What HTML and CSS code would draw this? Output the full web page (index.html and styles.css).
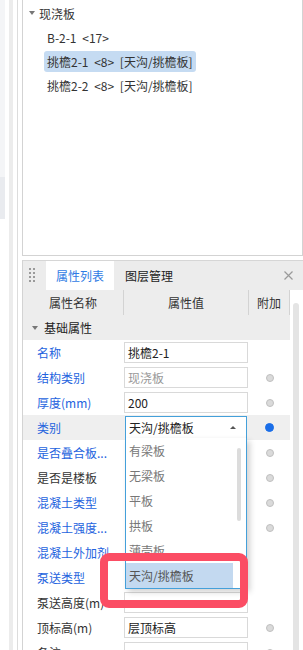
FILE: index.html
```html
<!DOCTYPE html>
<html lang="zh-CN">
<head>
    <meta charset="UTF-8">
    <title>属性列表</title>
    <link rel="stylesheet" href="styles.css">
</head>
<body>

<div class="frame">
    <!-- 左侧的窄条 -->
    <div class="side-strip">
        <div class="strip-top"></div>
        <div class="strip-mid"></div>
    </div>
    <div class="side-bar"></div>
    <div class="side-line"></div>

    <div class="main">
        <!-- 构件树 -->
        <div class="tree">
            <div class="tree-row tree-group"><span class="caret"></span>现浇板</div>
            <div class="tree-row tree-leaf"><span class="tree-label">B-2-1 &lt;17&gt;</span></div>
            <div class="tree-row tree-leaf"><span class="tree-label selected">挑檐2-1 &lt;8&gt; [天沟/挑檐板]</span></div>
            <div class="tree-row tree-leaf"><span class="tree-label">挑檐2-2 &lt;8&gt; [天沟/挑檐板]</span></div>
        </div>

        <!-- 属性面板 -->
        <div class="props">
            <div class="tabbar">
                <div class="grip">
                    <i></i><i></i><i></i><i></i><i></i><i></i><i></i><i></i>
                </div>
                <div class="tab active">属性列表</div>
                <div class="tab">图层管理</div>
                <div class="close">
                    <svg width="9" height="9" viewBox="0 0 9 9"><path d="M0.5 0.5L8.5 8.5M8.5 0.5L0.5 8.5" stroke="#9a9a9a" stroke-width="1.2"/></svg>
                </div>
            </div>

            <div class="props-body">
                <div class="grid">
                    <div class="prop-row head">
                        <div class="cell">属性名称</div>
                        <div class="cell">属性值</div>
                        <div class="cell">附加</div>
                    </div>
                    <div class="group-row"><span class="caret"></span>基础属性</div>

                    <div class="prop-row">
                        <div class="label blue">名称</div>
                        <div class="value"><div class="input">挑檐2-1</div></div>
                        <div class="extra"></div>
                    </div>
                    <div class="prop-row">
                        <div class="label blue">结构类别</div>
                        <div class="value"><div class="input muted">现浇板</div></div>
                        <div class="extra"><span class="dot"></span></div>
                    </div>
                    <div class="prop-row">
                        <div class="label blue">厚度(mm)</div>
                        <div class="value"><div class="input">200</div></div>
                        <div class="extra"><span class="dot"></span></div>
                    </div>
                    <div class="prop-row current">
                        <div class="label blue">类别</div>
                        <div class="value">
                            <div class="combo">
                                <div class="combo-box">天沟/挑檐板<span class="arrow"></span></div>
                                <div class="dropdown">
                                    <div class="dd-items">
                                        <div class="dd-item">有梁板</div>
                                        <div class="dd-item">无梁板</div>
                                        <div class="dd-item">平板</div>
                                        <div class="dd-item">拱板</div>
                                        <div class="dd-item">薄壳板</div>
                                        <div class="dd-item chosen">天沟/挑檐板</div>
                                    </div>
                                    <div class="dd-track"><div class="dd-thumb"></div></div>
                                </div>
                            </div>
                        </div>
                        <div class="extra"><span class="dot on"></span></div>
                    </div>
                    <div class="prop-row">
                        <div class="label blue">是否叠合板...</div>
                        <div class="value"></div>
                        <div class="extra"><span class="dot"></span></div>
                    </div>
                    <div class="prop-row">
                        <div class="label">是否是楼板</div>
                        <div class="value"></div>
                        <div class="extra"><span class="dot"></span></div>
                    </div>
                    <div class="prop-row">
                        <div class="label blue">混凝土类型</div>
                        <div class="value"></div>
                        <div class="extra"><span class="dot"></span></div>
                    </div>
                    <div class="prop-row">
                        <div class="label blue">混凝土强度...</div>
                        <div class="value"></div>
                        <div class="extra"><span class="dot"></span></div>
                    </div>
                    <div class="prop-row">
                        <div class="label blue">混凝土外加剂</div>
                        <div class="value"></div>
                        <div class="extra"></div>
                    </div>
                    <div class="prop-row">
                        <div class="label blue">泵送类型</div>
                        <div class="value"></div>
                        <div class="extra"></div>
                    </div>
                    <div class="prop-row">
                        <div class="label">泵送高度(m)</div>
                        <div class="value"><div class="input"></div></div>
                        <div class="extra"></div>
                    </div>
                    <div class="prop-row">
                        <div class="label">顶标高(m)</div>
                        <div class="value"><div class="input">层顶标高</div></div>
                        <div class="extra"><span class="dot"></span></div>
                    </div>
                    <div class="prop-row">
                        <div class="label">备注</div>
                        <div class="value"><div class="input"></div></div>
                        <div class="extra"><span class="dot"></span></div>
                    </div>
                </div>
                <div class="vscroll"></div>
            </div>

            <!-- 红色标注框 -->
            <div class="mark"></div>
        </div>
    </div>
</div>

</body>
</html>
```

FILE: styles.css
```css
/* 整体页面 */
body {
    margin: 0;
    font-family: "Noto Sans CJK SC", "Noto Sans", sans-serif;
    font-size: 12px;
    color: #333;
    background: #fff;
}

.frame {
    display: flex;
    width: 303px;
    height: 650px;
    overflow: hidden;
}

/* 左侧窄条 */
.side-strip {
    width: 5px;
}

.strip-top {
    height: 177px;
    background: #f4f5f7;
}

.strip-mid {
    height: 42px;
    background: #e9ebef;
}

.side-bar {
    width: 4px;
    margin-left: 4px;
    background: #ececec;
}

.side-line {
    width: 1px;
    margin-left: 4px;
    background: #dcdcdc;
}

.main {
    flex: 1;
    margin-left: 4px;
    display: flex;
    flex-direction: column;
}

/* 构件树 */
.tree {
    flex-shrink: 0;
    height: 256px;
    box-sizing: border-box;
    padding-top: 1px;
    border: 1px solid #d3d3d3;
    border-top: none;
}

.tree-row {
    height: 24px;
    display: flex;
    align-items: center;
    white-space: nowrap;
}

.tree-group {
    padding-left: 6px;
}

.tree-group .caret {
    margin-right: 4px;
}

.caret {
    width: 0;
    height: 0;
    border-left: 3px solid transparent;
    border-right: 3px solid transparent;
    border-top: 4px solid #777;
}

.tree-leaf {
    padding-left: 21px;
}

.tree-label {
    height: 21px;
    line-height: 21px;
    padding: 0 3px;
    border-radius: 3px;
    word-spacing: 3px;
}

.tree-label.selected {
    background: #c5dbf2;
}

/* 属性面板 */
.props {
    position: relative;
    margin-top: 4px;
    flex: 1;
    border-left: 1px solid #d3d3d3;
}

.tabbar {
    height: 30px;
    box-sizing: border-box;
    border-top: 1px solid #d6d6d6;
    background: #ececec;
    display: flex;
    align-items: stretch;
}

.grip {
    margin: 7px 0 0 6px;
    width: 6px;
    height: 14px;
    display: grid;
    grid-template-columns: 2px 2px;
    grid-auto-rows: 2px;
    column-gap: 2px;
    row-gap: 2px;
}

.grip i {
    background: #9a9a9a;
}

.tab {
    display: flex;
    align-items: center;
    padding: 0 11px;
    font-size: 12px;
    color: #222;
}

.tab.active {
    margin-left: 11px;
    width: 68px;
    padding: 0;
    justify-content: center;
    background: #fff;
    color: #2f7be4;
}

.close {
    margin-left: auto;
    margin-right: 10px;
    display: flex;
    align-items: center;
}

.props-body {
    display: flex;
}

.grid {
    width: 267px;
}

.prop-row {
    display: grid;
    grid-template-columns: 101px 125px 41px;
    height: 25px;
    align-items: center;
}

.prop-row.head {
    align-items: stretch;
    background: #ededed;
}

.head .cell {
    display: flex;
    align-items: center;
    justify-content: center;
    border-right: 1px solid #d3d3d3;
    color: #333;
}

.group-row {
    height: 25px;
    display: flex;
    align-items: center;
    padding-left: 9px;
    background: #ededed;
    color: #222;
}

.group-row .caret {
    margin-right: 6px;
}

.prop-row.current {
    background: #efefef;
}

.label {
    padding-left: 14px;
    white-space: nowrap;
    color: #333;
}

.label.blue {
    color: #2463de;
}

.input {
    width: 124px;
    height: 21px;
    box-sizing: border-box;
    border: 1px solid #d9d9d9;
    background: #fff;
    padding-left: 3px;
    line-height: 19px;
    color: #222;
}

.input.muted {
    color: #999;
}

.extra {
    display: flex;
    justify-content: center;
}

.dot {
    width: 8px;
    height: 8px;
    box-sizing: border-box;
    border-radius: 50%;
    background: #dadada;
    border: 1px solid #c0c0c0;
}

.dot.on {
    width: 9px;
    height: 9px;
    background: #1a6ee8;
    border-color: #1a6ee8;
}

/* 下拉框 */
.combo {
    position: relative;
    margin-left: 1px;
    width: 122px;
}

.combo-box {
    height: 23px;
    box-sizing: border-box;
    border: 1px solid #44a0da;
    background: #fff;
    padding: 0 10px 0 3px;
    display: flex;
    align-items: center;
    justify-content: space-between;
    color: #222;
}

.arrow {
    width: 0;
    height: 0;
    border-left: 3px solid transparent;
    border-right: 3px solid transparent;
    border-bottom: 3px solid #555;
}

.dropdown {
    position: absolute;
    left: 0;
    top: 22px;
    width: 122px;
    height: 151px;
    box-sizing: border-box;
    border: 1px solid #44a0da;
    border-top: none;
    background: #fff;
    box-shadow: 3px 3px 6px rgba(0, 0, 0, 0.18);
    display: flex;
    z-index: 2;
}

.dd-items {
    width: 107px;
}

.dd-item {
    height: 25px;
    line-height: 25px;
    padding-left: 3px;
    color: #777;
}

.dd-item.chosen {
    background: #c3d9f0;
    color: #555;
}

.dd-track {
    flex: 1;
    padding: 10px 0 0 4px;
}

.dd-thumb {
    width: 4px;
    height: 73px;
    border-radius: 2px;
    background: #dcdcdc;
}

/* 面板滚动条 */
.vscroll {
    width: 6px;
    height: 400px;
    margin: 13px 0 0 3px;
    border-radius: 3px 3px 0 0;
    background: #e4e4e4;
}

/* 红色标注框 */
.mark {
    position: absolute;
    left: 77px;
    top: 293px;
    width: 148px;
    height: 55px;
    box-sizing: border-box;
    border: 8px solid #fb4d64;
    border-radius: 9px;
    z-index: 3;
}
```
